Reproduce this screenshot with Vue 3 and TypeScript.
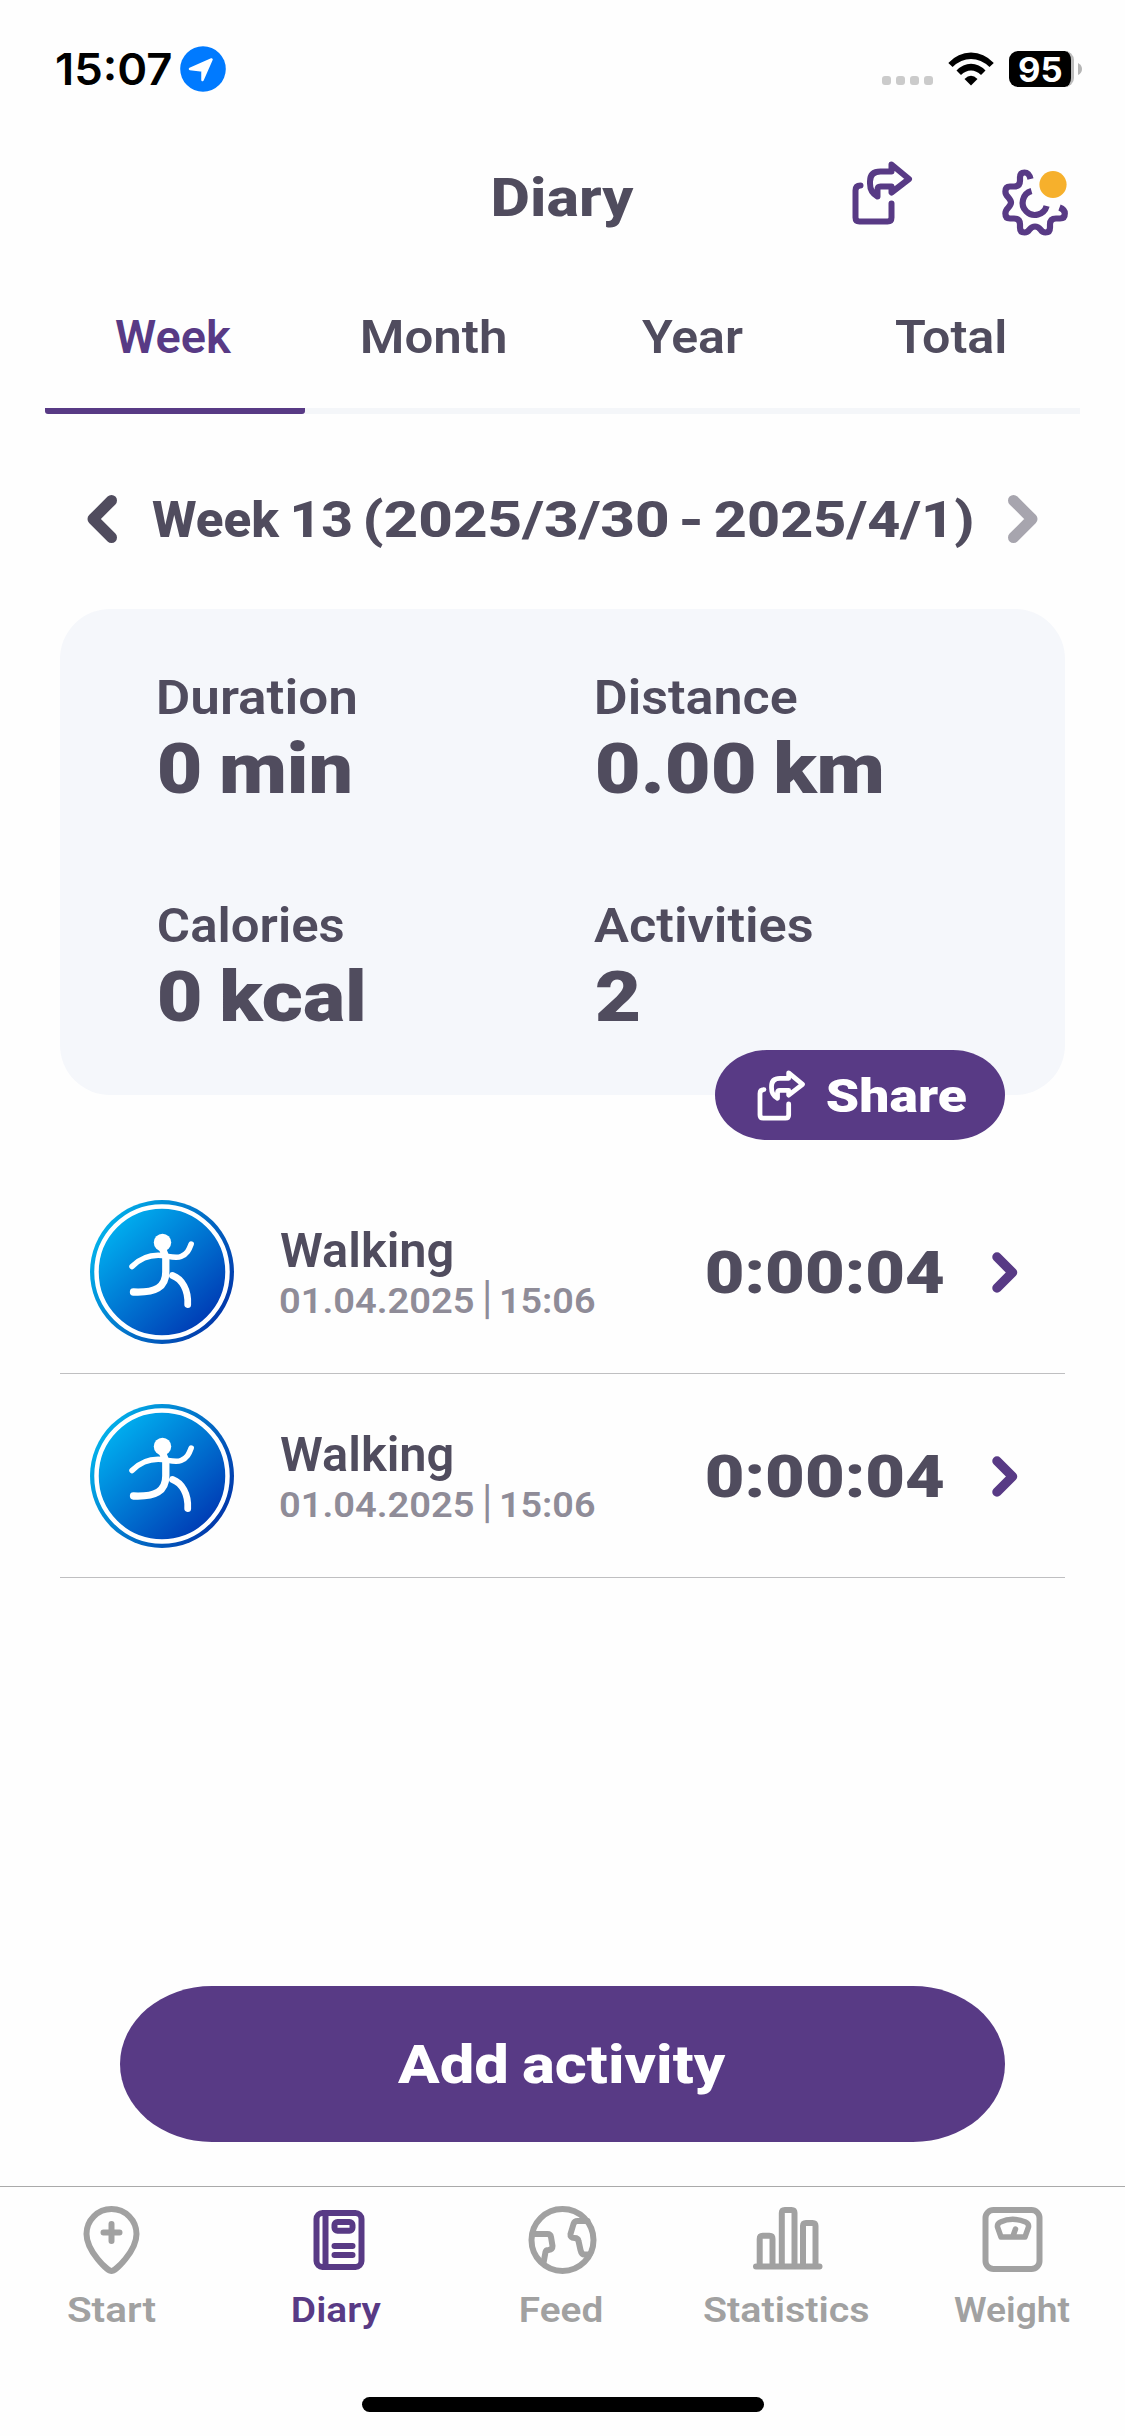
<script setup lang="ts">
import { h, type FunctionalComponent } from 'vue'

interface LabelProps {
  text: string
  w: number
  cap: number
  weight?: number
  family?: string
}

const CAP_RATIO: Record<string, number> = { Roboto: 0.711, Inter: 0.727 }
const ctx = document.createElement('canvas').getContext('2d')!

// One line of text, sized by its cap height and set to a fixed visible width.
const Label: FunctionalComponent<LabelProps> = (p) => {
  const family = p.family ?? 'Roboto'
  const weight = p.weight ?? 560
  const size = p.cap / CAP_RATIO[family]
  const wordSpacing = `${(-0.04 * size).toFixed(2)}px`
  ctx.font = `${weight} ${size}px ${family}`
  ctx.wordSpacing = wordSpacing
  const m = ctx.measureText(p.text)
  const scale = p.w / (m.actualBoundingBoxLeft + m.actualBoundingBoxRight)
  return h('svg', { width: p.w, height: p.cap, style: 'display:block;overflow:visible;flex:none' }, [
    h('text', {
      x: m.actualBoundingBoxLeft,
      y: p.cap,
      fill: 'currentColor',
      'font-family': `${family}, sans-serif`,
      'font-size': size,
      'font-weight': weight,
      'word-spacing': wordSpacing,
      transform: `scale(${scale} 1)`,
    }, p.text),
  ])
}
Label.props = ['text', 'w', 'cap', 'weight', 'family']

const tabs = [
  { name: 'Week', w: 117 },
  { name: 'Month', w: 142 },
  { name: 'Year', w: 101 },
  { name: 'Total', w: 110 },
]
const period = [
  { word: 'Week', w: 128 },
  { word: '13', w: 57 },
  { word: '(2025/3/30', w: 301.5 },
  { word: '-', w: 18.5 },
  { word: '2025/4/1)', w: 257.5 },
]
const stats = [
  { label: 'Duration', lw: 197, value: '0 min', vw: 191 },
  { label: 'Distance', lw: 200, value: '0.00 km', vw: 285 },
  { label: 'Calories', lw: 184, value: '0 kcal', vw: 204 },
  { label: 'Activities', lw: 218, value: '2', vw: 41 },
]
const activities = [
  { id: 1, name: 'Walking', date: '01.04.2025', time: '15:06', duration: '0:00:04' },
  { id: 2, name: 'Walking', date: '01.04.2025', time: '15:06', duration: '0:00:04' },
]
const menu = [
  { name: 'Start', w: 88, box: '76.5 2204 72 72' },
  { name: 'Diary', w: 88, box: '301.5 2204 72 72' },
  { name: 'Feed', w: 81, box: '526.5 2204 72 72' },
  { name: 'Statistics', w: 165, box: '751.5 2204 72 72' },
  { name: 'Weight', w: 116, box: '976.5 2204 72 72' },
]
const sharePaths = [
  'M860 185Q855 185 855 190V217Q855 221 859 221H887Q891 221 891 217V203',
  'M891 164L908.5 178.5L891 192V186H880Q877 186 877 189V196Q869.5 192 869.5 183V181Q869.5 171 880 171H891Z',
]
</script>

<template>
  <div class="page">
    <div class="status">
      <Label text="15:07" :w="114" :cap="32" :weight="570" family="Inter" />
      <svg class="loc" width="46" height="46" viewBox="0 0 46 46">
        <circle cx="23" cy="23" r="22.8" fill="#007aff" />
        <path d="M10 23L31.500 13.500L22.500 34V24.500Z" fill="#fff" stroke="#fff" stroke-width="2.500" stroke-linejoin="round" />
      </svg>
      <div class="dots"><i v-for="n in 4" :key="n"></i></div>
      <svg class="wifi" width="46" height="34" viewBox="948 51.500 46 34">
        <path d="M948.300 62.500Q958 52 971 52T993.800 62.500L989.500 66.500Q981 58.500 971 58.500T952.600 66.500Z" />
        <path d="M956.500 70Q963 63.200 971 63.200T985.500 70L981 74.500Q976.500 70 971 70T961 74.500Z" />
        <path d="M964.500 78.500Q971 72 977.500 78.500L971 85Z" />
      </svg>
      <div class="battery"><Label text="95" :w="42" :cap="24.500" :weight="700" family="Inter" /></div>
      <svg class="nub" width="4" height="12" viewBox="0 0 4 12"><path d="M0 0Q4 2 4 6T0 12Z" fill="#b5b5b5" /></svg>
    </div>

    <header class="header">
      <Label class="title" text="Diary" :w="140" :cap="38" :weight="850" />
      <div class="tools">
        <svg class="share-tool" width="61" height="64" viewBox="851.500 160.500 61 64">
          <path v-for="d in sharePaths" :key="d" :d="d" />
        </svg>
        <svg class="gear" width="67" height="67" viewBox="1002 168.500 67 67">
          <path d="M1030.500 178.500Q1029 172 1024.500 172Q1020 172 1020 177V180Q1020 186 1014 186H1010Q1005.400 186 1005.400 191Q1005.400 194 1008 196.500Q1011 200 1011 202Q1011 204 1008 207.500Q1005.400 210 1005.400 213Q1005.400 218 1010 218H1014Q1020 218 1020 224V227Q1020 232 1024.500 232Q1027.500 232 1029.500 229Q1032 226 1035 226Q1038 226 1040.500 229Q1042.500 232 1045.500 232Q1050 232 1050 227V224Q1050 218 1056 218H1060Q1064.800 218 1064.800 213Q1064.800 209 1059.500 207" />
          <path d="M1031.500 190.500A12.200 12.200 0 1 0 1046.600 205.500" />
          <circle cx="1053" cy="184" r="13.600" />
        </svg>
      </div>
    </header>

    <nav class="tabs">
      <div v-for="(t, i) in tabs" :key="t.name" class="tab" :class="{ active: i === 0 }">
        <Label :text="t.name" :w="t.w" :cap="33.500" />
      </div>
    </nav>

    <div class="period">
      <svg class="arrow" width="30" height="48" viewBox="0 0 30 48"><path d="M24.500 5.500L6 24L24.500 42.500" /></svg>
      <div class="range">
        <Label v-for="p in period" :key="p.word" :text="p.word" :w="p.w" :cap="35.500" :weight="850" />
      </div>
      <svg class="arrow next" width="30" height="48" viewBox="0 0 30 48"><path d="M5.500 5.500L24 24L5.500 42.500" /></svg>
    </div>

    <section class="card">
      <div v-for="s in stats" :key="s.label" class="stat" :class="{ wide: s.label === 'Activities' }">
        <Label class="name" :text="s.label" :w="s.lw" :cap="34" />
        <Label :text="s.value" :w="s.vw" :cap="50" :weight="900" />
      </div>
      <div class="share">
        <svg width="49" height="51" viewBox="851.500 160.500 61 64">
          <path v-for="d in sharePaths" :key="d" :d="d" />
        </svg>
        <Label text="Share" :w="139" :cap="33.500" :weight="900" />
      </div>
    </section>

    <section class="list">
      <div v-for="a in activities" :key="a.id" class="row">
        <svg class="avatar" width="144" height="144" viewBox="90 1200 144 144">
          <defs>
            <linearGradient id="rim" x1="0" y1="0.200" x2="1" y2="0.800">
              <stop offset="0" stop-color="#02b8ee" /><stop offset="1" stop-color="#0230a6" />
            </linearGradient>
            <linearGradient id="disc" x1="0.100" y1="0.100" x2="0.850" y2="0.900">
              <stop offset="0" stop-color="#00b4f2" /><stop offset="1" stop-color="#0039b3" />
            </linearGradient>
          </defs>
          <circle cx="162" cy="1272" r="72" fill="url(#rim)" />
          <circle cx="162" cy="1272" r="65.500" fill="url(#disc)" stroke="#fff" stroke-width="4.500" />
          <circle cx="162.500" cy="1242.500" r="8.700" fill="#fff" />
          <g fill="none" stroke="#fff" stroke-linecap="round" stroke-linejoin="round">
            <path d="M132 1266.500C141 1257.500 151 1254.500 162 1255.500C170 1256.500 176 1258.500 181 1256.500C187 1254 189 1250 191.200 1244" stroke-width="5.500" />
            <path d="M163 1250L165.800 1257V1272C165.800 1287 156 1293 133.500 1292" stroke-width="7.300" />
            <path d="M172.500 1275.500C182 1279 188.500 1290 187.700 1304.500" stroke-width="6.800" />
          </g>
        </svg>
        <div class="info">
          <Label :text="a.name" :w="172" :cap="34" :weight="600" />
          <div class="when">
            <Label :text="a.date" :w="193" :cap="25.500" :weight="600" />
            <Label class="bar" text="|" :w="4" :cap="33" />
            <Label :text="a.time" :w="94" :cap="25.500" :weight="600" />
          </div>
        </div>
        <Label class="time" :text="a.duration" :w="236" :cap="42.500" :weight="900" />
        <svg class="go" width="26" height="41" viewBox="992 1251.500 26 41"><path d="M997 1256.500L1012.500 1272L997 1287.500" /></svg>
      </div>
    </section>

    <div class="add"><Label text="Add activity" :w="328" :cap="38" :weight="850" /></div>

    <footer class="menu">
      <div v-for="m in menu" :key="m.name" class="item" :class="{ on: m.name === 'Diary' }">
        <svg width="72" height="72" :viewBox="m.box">
          <template v-if="m.name === 'Start'">
            <path d="M111 2271C107 2271 86 2251 86 2234A25 25 0 0 1 136 2234C136 2251 115 2271 111 2271Z" />
            <path d="M111 2224V2241M103 2232.500H119" />
          </template>
          <template v-else-if="m.name === 'Diary'">
            <rect x="316" y="2213" width="45" height="54" rx="6" />
            <path d="M325 2213V2267M334 2246H352M334 2255H352" />
            <rect x="334" y="2222" width="18" height="8.700" rx="3" />
          </template>
          <template v-else-if="m.name === 'Feed'">
            <circle cx="562" cy="2240" r="31" />
            <path d="M534 2234H547Q550 2234 550.500 2237L552 2246Q552 2249.500 548 2250Q545.500 2250 545 2252L543 2263" />
            <path d="M587 2221H577Q574 2221 573 2224L570 2234Q569.500 2238 574 2238Q577.500 2238 578 2241L580 2250Q581 2254.500 584 2254.500H589" />
          </template>
          <template v-else-if="m.name === 'Statistics'">
            <path d="M755.500 2266.500H819" />
            <path d="M759.200 2266V2239Q759.200 2235.800 762.200 2235.800H769Q772 2235.800 772 2239V2266M781.300 2266V2213Q781.300 2210 784.300 2210H791Q794 2210 794 2213V2266M802.500 2266V2226Q802.500 2223 805.500 2223H812Q815 2223 815 2226V2266" />
          </template>
          <template v-else>
            <rect x="985" y="2210" width="54" height="59" rx="8" />
            <path d="M1000.500 2237L997 2227Q996.500 2223.500 1000 2222Q1012 2216.500 1025 2222Q1028.500 2223.500 1028 2227L1024.500 2237ZM1012.500 2236L1015 2229" stroke-width="5.500" />
          </template>
        </svg>
        <Label class="caption" :text="m.name" :w="m.w" :cap="25.500" />
      </div>
      <div class="home"></div>
    </footer>
  </div>
</template>

<style>
body {
  background: #fefefe;
}
</style>

<style scoped>
.page {
  width: 1125px;
  height: 2436px;
  display: flex;
  flex-direction: column;
  background: #fefefe;
  color: #504c5e;
  overflow: hidden;
  font-family: Roboto, sans-serif;
}
.status {
  height: 138px;
  display: flex;
  align-items: center;
  padding: 0 43px 0 57px;
  color: #000;
}
.loc {
  margin-left: 9px;
}
.dots {
  display: flex;
  gap: 5px;
  margin: 23px 15px 0 auto;
}
.dots i {
  width: 9px;
  height: 9px;
  border-radius: 3px;
  background: #cbcbcb;
}
.wifi {
  margin-right: 15px;
}
.battery {
  width: 62px;
  height: 36px;
  display: flex;
  align-items: center;
  justify-content: center;
  border-radius: 9px;
  background: #000;
  border-right: 3px solid #bdbdbd;
  color: #fff;
}
.nub {
  margin-left: 4px;
}
.header {
  height: 118px;
  display: grid;
  grid-template-columns: 1fr auto 1fr;
  align-items: center;
  padding: 0 56px;
}
.title {
  grid-column: 2;
  margin: 0 -1.5px 0 1.5px;
}
.tools {
  align-self: start;
  display: flex;
  justify-content: flex-end;
  align-items: flex-start;
  gap: 89.5px;
}
.tools svg,
.share svg:first-child,
.arrow,
.go,
.item > svg:first-child {
  fill: none;
  stroke: currentColor;
  stroke-width: 6;
  stroke-linecap: round;
  stroke-linejoin: round;
}
.tools svg {
  color: #583a85;
}
.share-tool {
  margin-top: 22.5px;
}
.tools .gear {
  margin-top: 30.5px;
  stroke-width: 6.2;
  stroke-linecap: butt;
}
.gear circle {
  fill: #f6b02c;
  stroke: none;
}
.tabs {
  height: 158px;
  display: flex;
  margin: 0 45px;
}
.tab {
  flex: 1;
  display: flex;
  justify-content: center;
  padding: 63px 1px 0 0;
  box-shadow: inset 0 -6px #f4f6f9;
}
.tab.active {
  padding-right: 3px;
  color: #583a85;
  background: linear-gradient(#583a85, #583a85) bottom / 100% 6px no-repeat;
  box-shadow: none;
  border-radius: 0 0 3px 3px;
}
.period {
  height: 60px;
  margin: 75px 87px 60px;
  display: flex;
  align-items: center;
  justify-content: space-between;
}
.arrow {
  stroke-width: 11;
}
.range {
  width: 820px;
  margin-right: 1px;
  display: flex;
  justify-content: space-between;
}
.period .next {
  color: #a7a5ae;
}
.card {
  position: relative;
  box-sizing: border-box;
  height: 486px;
  margin: 0 60px;
  padding: 71px 0 0 99px;
  display: grid;
  grid-template-columns: 438px 1fr;
  grid-auto-rows: 228px;
  border-radius: 50px;
  background: #f5f7fb;
}
.stat {
  display: flex;
  flex-direction: column;
  gap: 28.5px;
}
.stat.wide .name {
  margin-left: -3px;
}
.share {
  position: absolute;
  right: 60px;
  bottom: -45px;
  box-sizing: border-box;
  width: 290px;
  height: 90px;
  padding-left: 42px;
  display: flex;
  align-items: center;
  gap: 21px;
  border-radius: 52px / 45px;
  background: #583a85;
  color: #fff;
}
.list {
  margin: 75px 60px 0;
}
.row {
  box-sizing: border-box;
  height: 204px;
  display: flex;
  align-items: flex-start;
  padding: 30px 47px 0 30px;
  border-bottom: 1px solid #bfbfc1;
}
.info {
  margin: 33px auto 0 46px;
}
.when {
  display: flex;
  align-items: flex-start;
  margin-top: 20px;
  gap: 12px;
  color: #8f8c98;
}
.bar {
  margin: -7.5px 0;
}
.time {
  margin: 49.5px 49px 0 0;
}
.go {
  margin-top: 51.5px;
  color: #583a85;
  stroke-width: 9.5;
}
.add {
  box-sizing: border-box;
  height: 156px;
  margin: auto 120px 44px;
  padding: 0 2px 1px 0;
  display: flex;
  align-items: center;
  justify-content: center;
  border-radius: 92px / 78px;
  background: #583a85;
  color: #fff;
}
.menu {
  position: relative;
  box-sizing: border-box;
  height: 250px;
  display: flex;
  border-top: 1px solid #aaa;
  color: #a1a1a1;
}
.item {
  width: 225px;
  padding-top: 17px;
  display: flex;
  flex-direction: column;
  align-items: center;
  gap: 20px;
}
.caption {
  margin-right: 2px;
}
.item.on {
  color: #583a85;
}
.home {
  position: absolute;
  left: 362px;
  bottom: 24px;
  width: 402px;
  height: 15px;
  border-radius: 8px;
  background: #000;
}
</style>
